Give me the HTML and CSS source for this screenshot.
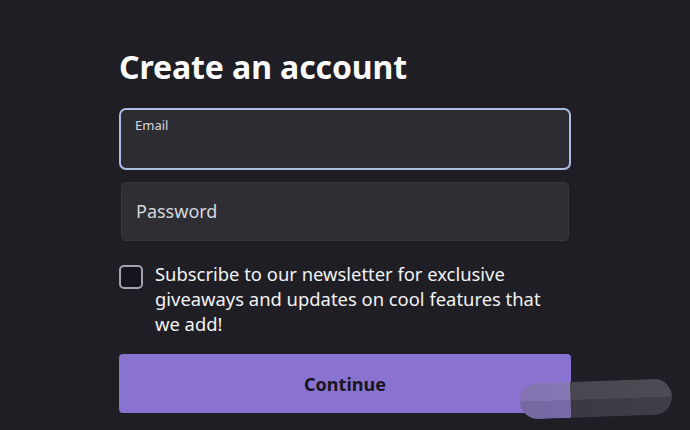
FILE: index.html
```html
<!DOCTYPE html>
<html lang="en">
<head>
<meta charset="UTF-8" />
<meta name="viewport" content="width=device-width, initial-scale=1" />
<title>Create an account</title>
<link rel="stylesheet" href="styles.css">
</head>
<body>
  <main class="signup">
    <h1>Create an account</h1>
    <label class="field field-focus">
      <span class="field-label">Email</span>
      <input type="email" aria-label="Email">
    </label>
    <label class="field">
      <span class="field-placeholder">Password</span>
    </label>
    <label class="opt-in">
      <span class="box"></span>
      <span class="opt-text">Subscribe to our newsletter for exclusive giveaways and updates on cool features that we add!</span>
    </label>
    <button class="continue">Continue</button>
  </main>
  <div class="smudge"></div>
</body>
</html>
```

FILE: styles.css
```css
* {
  box-sizing: border-box;
}
body {
  margin: 0;
  background: #1f1e24;
  color: #f2f2f4;
  font-family: 'Noto Sans', 'Open Sans', sans-serif;
  height: 430px;
  overflow: hidden;
  position: relative;
}
.signup {
  width: 452px;
  margin: 0 auto;
  padding-top: 43px;
  display: flex;
  flex-direction: column;
}
h1 {
  margin: 0 0 17px;
  font-size: 32px;
  font-weight: 700;
  line-height: 48px;
  letter-spacing: -0.1px;
  color: #fafafa;
}
.field {
  height: 59px;
  margin: 0 2px 24px;
  border-radius: 5px;
  background: #2e2e34;
  border: 1px solid #38383e;
  display: flex;
  flex-direction: column;
  justify-content: center;
  padding: 0 14px;
}
.field-focus {
  margin: 0 0 12px;
  height: 62px;
  border: 2px solid #aabde4;
  border-radius: 7px;
  justify-content: flex-start;
  padding: 6px 14px 0;
  background: #2c2c32;
}
.field-label {
  font-size: 13px;
  color: #d8d8dc;
  line-height: 18px;
}
.field input {
  background: transparent;
  border: 0;
  outline: none;
  padding: 0;
  height: 22px;
}
.field-placeholder {
  font-size: 18px;
  color: #d6d6da;
  margin-top: -2px;
}
.opt-in {
  display: flex;
  gap: 12px;
  align-items: flex-start;
}
.box {
  flex: none;
  width: 24px;
  height: 24px;
  border: 2px solid #a4a4ac;
  border-radius: 5px;
  background: #16151d;
}
.opt-text {
  width: 400px;
  font-size: 18.4px;
  line-height: 25px;
  margin-top: -4px;
  color: #f2f2f4;
}
.continue {
  margin-top: 18px;
  height: 59px;
  border: none;
  border-radius: 4px;
  background: #8a72d0;
  color: #17161c;
  font-family: inherit;
  font-size: 18px;
  font-weight: 700;
  padding-top: 2px;
}
/* blurred scribble over the corner of the button */
.smudge {
  position: absolute;
  left: 520px;
  top: 381px;
  width: 152px;
  height: 36px;
  border-radius: 18px;
  background:
    linear-gradient(180deg, rgba(255,255,255,0.05) 0 50%, rgba(0,0,0,0.06) 50% 100%),
    linear-gradient(90deg, #7c6cab 0, #8071b2 33%, #3e3d46 33.5%, #44434c 100%);
  transform: rotate(-2deg);
}
```
